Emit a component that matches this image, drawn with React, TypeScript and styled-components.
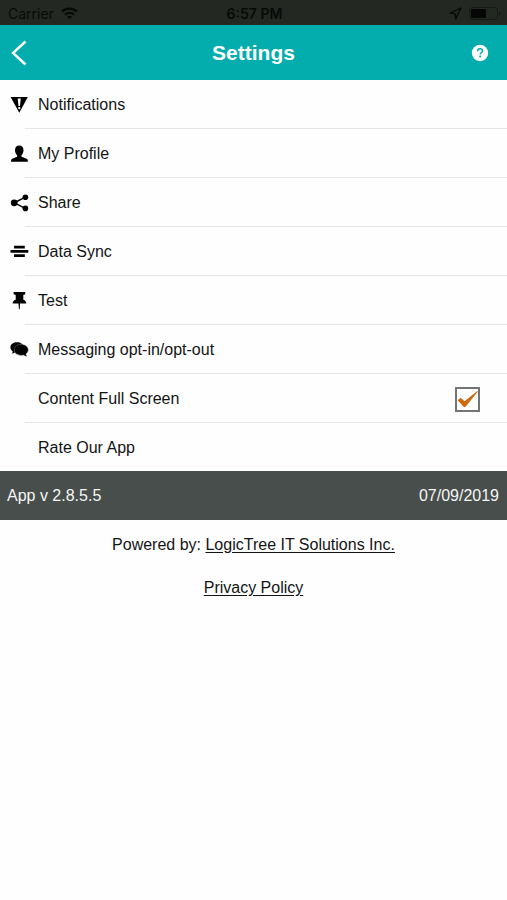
import React, { useState } from "react";
import styled, { createGlobalStyle } from "styled-components";

const GlobalStyle = createGlobalStyle`
  *, *::before, *::after { box-sizing: border-box; }
  body {
    margin: 0;
    background: #fefefe;
    color: #141414;
    font-family: "Liberation Sans", Arial, sans-serif;
    font-size: 16px;
    line-height: 24px;
  }
  button, input { font: inherit; color: inherit; }
`;

const StatusBar = styled.div`
  display: grid;
  grid-template-columns: 1fr auto 1fr;
  align-items: center;
  height: 25px;
  padding: 2px 6px 0 8px;
  background: #232823;
  color: #080a08;
  font-family: Inter, "Liberation Sans", sans-serif;
  font-size: 14px;
  line-height: 20px;
`;

const StatusGroup = styled.div<{ $end?: boolean }>`
  display: flex;
  align-items: center;
  justify-content: ${(p) => (p.$end ? "flex-end" : "flex-start")};
  gap: 7px;
`;

const Clock = styled.span`
  font-weight: 600;
`;

const Header = styled.header`
  display: grid;
  grid-template-columns: 1fr auto 1fr;
  align-items: center;
  height: 55px;
  padding: 0 10px;
  background: #03acad;
  color: #fff;
`;

const Title = styled.h1`
  margin: 0;
  font-size: 21px;
  line-height: 24px;
  font-weight: 700;
`;

const IconButton = styled.button<{ $end?: boolean }>`
  display: flex;
  justify-self: ${(p) => (p.$end ? "end" : "start")};
  margin: 0;
  padding: ${(p) => (p.$end ? "0 8px" : "0")};
  border: 0;
  background: none;
  cursor: pointer;
`;

const Menu = styled.ul`
  margin: 0;
  padding: 0;
  list-style: none;
`;

const MenuItem = styled.li`
  &:not(:last-child)::after {
    content: "";
    display: block;
    height: 1px;
    margin-left: 25px;
    background: #e6e6e6;
  }
`;

const MenuButton = styled.button`
  display: flex;
  align-items: center;
  gap: 8px;
  width: 100%;
  height: 48px;
  padding: 2px 10px 0;
  border: 0;
  background: none;
  text-align: left;
  cursor: pointer;
`;

const MenuLabel = styled.label`
  display: flex;
  align-items: center;
  gap: 8px;
  height: 48px;
  padding: 2px 27px 0 10px;
  cursor: pointer;
`;

const IconSlot = styled.span`
  display: flex;
  flex: none;
  width: 20px;
  height: 20px;
  color: #000;
`;

const Grow = styled.span`
  flex: 1;
`;

const CheckWrap = styled.span`
  display: grid;
  width: 25px;
  height: 25px;

  > * { grid-area: 1 / 1; }
  > svg { pointer-events: none; }
`;

const Checkbox = styled.input`
  appearance: none;
  width: 100%;
  height: 100%;
  margin: 0;
  border: 2px solid #747474;
  background: #fff;
  cursor: pointer;
`;

const VersionBar = styled.div`
  display: flex;
  align-items: center;
  justify-content: space-between;
  height: 49px;
  padding: 1px 8px 0 7px;
  background: #484e4b;
  color: #f4f6f5;
`;

const Footer = styled.footer`
  display: flex;
  flex-direction: column;
  align-items: center;
  gap: 19px;
  padding: 13px 8px;
`;

const Paragraph = styled.p`
  margin: 0;
`;

const Link = styled.a`
  color: inherit;
  text-decoration: underline;
  text-underline-offset: 2px;
`;

const Glyph = ({ children }: { children: React.ReactNode }) => (
  <svg width="20" height="20" viewBox="0 0 20 20" fill="currentColor" aria-hidden="true">
    {children}
  </svg>
);

const AlertIcon = () => (
  <Glyph>
    <path d="M.6 2.1h17.2L9.3 17.8z" />
    <path d="M7.7 3.6h3.1l-.8 7.5H8.5z" fill="#fff" />
    <circle cx="9.25" cy="13.1" r="1.2" fill="#fff" />
  </Glyph>
);

const ProfileIcon = () => (
  <Glyph>
    <path d="M9.2 1.6c2.8 0 4.3 1.8 4.3 4.7 0 2-.8 3.800-2 4.900v1.600c1.700.9 4.600 1.300 5.900 2.500.4.5.5 1.400.5 2.400H1c0-1 .1-1.900.5-2.400 1.300-1.200 4-1.600 5.600-2.500v-1.600c-1.300-1.100-2.100-2.900-2.100-4.900 0-2.900 1.500-4.700 4.200-4.700z" />
  </Glyph>
);

const ShareIcon = () => (
  <Glyph>
    <path d="M15.300 4.200 4.300 9.800l11 5.600" fill="none" stroke="currentColor" strokeWidth="1.500" />
    <circle cx="4.200" cy="9.800" r="3.400" />
    <circle cx="15.400" cy="4.300" r="2.800" />
    <circle cx="15.400" cy="15.400" r="2.800" />
  </Glyph>
);

const SyncIcon = () => (
  <Glyph>
    <path d="M4 3.800h10.800v2.600H4zM.5 8h17.800v2.800H.5zM4 12.300h10.800v2.600H4z" />
  </Glyph>
);

const PinIcon = () => (
  <Glyph>
    <path d="M3.600 1h11.600v2.300l-1.900.7v4.800c2 .7 3 1.900 3 3.600H10l-.3 5.800h-.8l-.4-5.800H2.600c0-1.700 1-2.900 3.100-3.600V4l-2.100-.7z" />
  </Glyph>
);

const ChatIcon = () => (
  <Glyph>
    <path d="M7 2.200c3.700 0 6.700 2 6.700 5.100s-3 5.400-6.700 5.400c-.8 0-1.500-.1-2.100-.3-.9.700-2 1-3.100 1 .6-.6.9-1.300.9-2C1.300 10.400.4 9 .4 7.300.4 4.200 3.300 2.200 7 2.200z" />
    <path
      d="M11.200 4.400c4 0 7 2.200 7 5.400 0 1.700-.9 3.200-2.300 4.200.1.900.5 1.600 1.200 2.200-1.300 0-2.600-.4-3.600-1.200-.7.200-1.500.3-2.300.3-4 0-7-2.300-7-5.500s3-5.400 7-5.400z"
      stroke="#888"
      strokeWidth=".5"
    />
  </Glyph>
);

const BackIcon = () => (
  <svg width="18" height="26" viewBox="0 0 18 26" fill="none" stroke="currentColor" strokeWidth="2.400" aria-hidden="true">
    <path d="M15.500 1.500 3 13l12.500 11.500" />
  </svg>
);

const HelpIcon = () => (
  <svg width="18" height="18" viewBox="0 0 18 18" aria-hidden="true">
    <circle cx="9" cy="9" r="8.200" fill="#fff" />
    <path d="M6.600 7.200C6.600 5.700 7.600 4.800 9 4.800s2.500.8 2.500 2.100c0 1.900-2.300 1.800-2.300 3.500" fill="none" stroke="#03acad" strokeWidth="1.500" />
    <circle cx="9.200" cy="12.600" r="1" fill="#03acad" />
  </svg>
);

const WifiIcon = () => (
  <svg width="17" height="13" viewBox="0 0 17 13" fill="none" stroke="currentColor" strokeWidth="2.200" aria-hidden="true">
    <path d="M1 4.600c4.300-4 10.700-4 15 0M3.800 7.700c2.700-2.500 6.700-2.500 9.400 0" />
    <path d="M6 9.700c1.500-1.200 3.500-1.200 5 0l-2.500 2.600z" fill="currentColor" stroke="none" />
  </svg>
);

const LocationIcon = () => (
  <svg width="13" height="13" viewBox="0 0 13 13" fill="none" stroke="currentColor" strokeWidth="1.300" strokeLinejoin="round" aria-hidden="true">
    <path d="M12 1 1.200 6.100l5 .700.500 5.200z" />
  </svg>
);

const BatteryIcon = () => (
  <svg width="32" height="13" viewBox="0 0 32 13" aria-hidden="true">
    <rect x=".5" y=".5" width="28" height="12" rx="3" fill="none" stroke="#171b17" />
    <rect x="2" y="2" width="15" height="9" rx="1" fill="#050605" />
    <path d="M30 4.500c2 .8 2 3.200 0 4z" fill="#171b17" />
  </svg>
);

const CheckMark = () => (
  <svg width="25" height="25" viewBox="0 0 25 25" aria-hidden="true">
    <path d="M2.600 13.200 5.600 10.800 9.600 14.300 22 4.200c.6-.3.900.2.500.7L11 19.300c-.8 1-1.900 1-2.600.1z" fill="#cf690d" />
  </svg>
);

const items: { label: string; icon: React.ReactNode }[] = [
  { label: "Notifications", icon: <AlertIcon /> },
  { label: "My Profile", icon: <ProfileIcon /> },
  { label: "Share", icon: <ShareIcon /> },
  { label: "Data Sync", icon: <SyncIcon /> },
  { label: "Test", icon: <PinIcon /> },
  { label: "Messaging opt-in/opt-out", icon: <ChatIcon /> },
];

export default function App() {
  const [fullScreen, setFullScreen] = useState(true);

  return (
    <>
      <GlobalStyle />
      <StatusBar>
        <StatusGroup>
          <span>Carrier</span>
          <WifiIcon />
        </StatusGroup>
        <Clock>6:57 PM</Clock>
        <StatusGroup $end>
          <LocationIcon />
          <BatteryIcon />
        </StatusGroup>
      </StatusBar>
      <Header>
        <IconButton type="button" aria-label="Back">
          <BackIcon />
        </IconButton>
        <Title>Settings</Title>
        <IconButton type="button" aria-label="Help" $end>
          <HelpIcon />
        </IconButton>
      </Header>
      <main>
        <Menu>
          {items.map(({ label, icon }) => (
            <MenuItem key={label}>
              <MenuButton type="button">
                <IconSlot>{icon}</IconSlot>
                {label}
              </MenuButton>
            </MenuItem>
          ))}
          <MenuItem>
            <MenuLabel>
              <IconSlot />
              <Grow>Content Full Screen</Grow>
              <CheckWrap>
                <Checkbox
                  type="checkbox"
                  checked={fullScreen}
                  onChange={(e) => setFullScreen(e.target.checked)}
                />
                {fullScreen && <CheckMark />}
              </CheckWrap>
            </MenuLabel>
          </MenuItem>
          <MenuItem>
            <MenuButton type="button">
              <IconSlot />
              Rate Our App
            </MenuButton>
          </MenuItem>
        </Menu>
        <VersionBar>
          <span>App v 2.8.5.5</span>
          <span>07/09/2019</span>
        </VersionBar>
      </main>
      <Footer>
        <Paragraph>
          Powered by: <Link href="#logictree">LogicTree IT Solutions Inc.</Link>
        </Paragraph>
        <Link href="#privacy">Privacy Policy</Link>
      </Footer>
    </>
  );
}
